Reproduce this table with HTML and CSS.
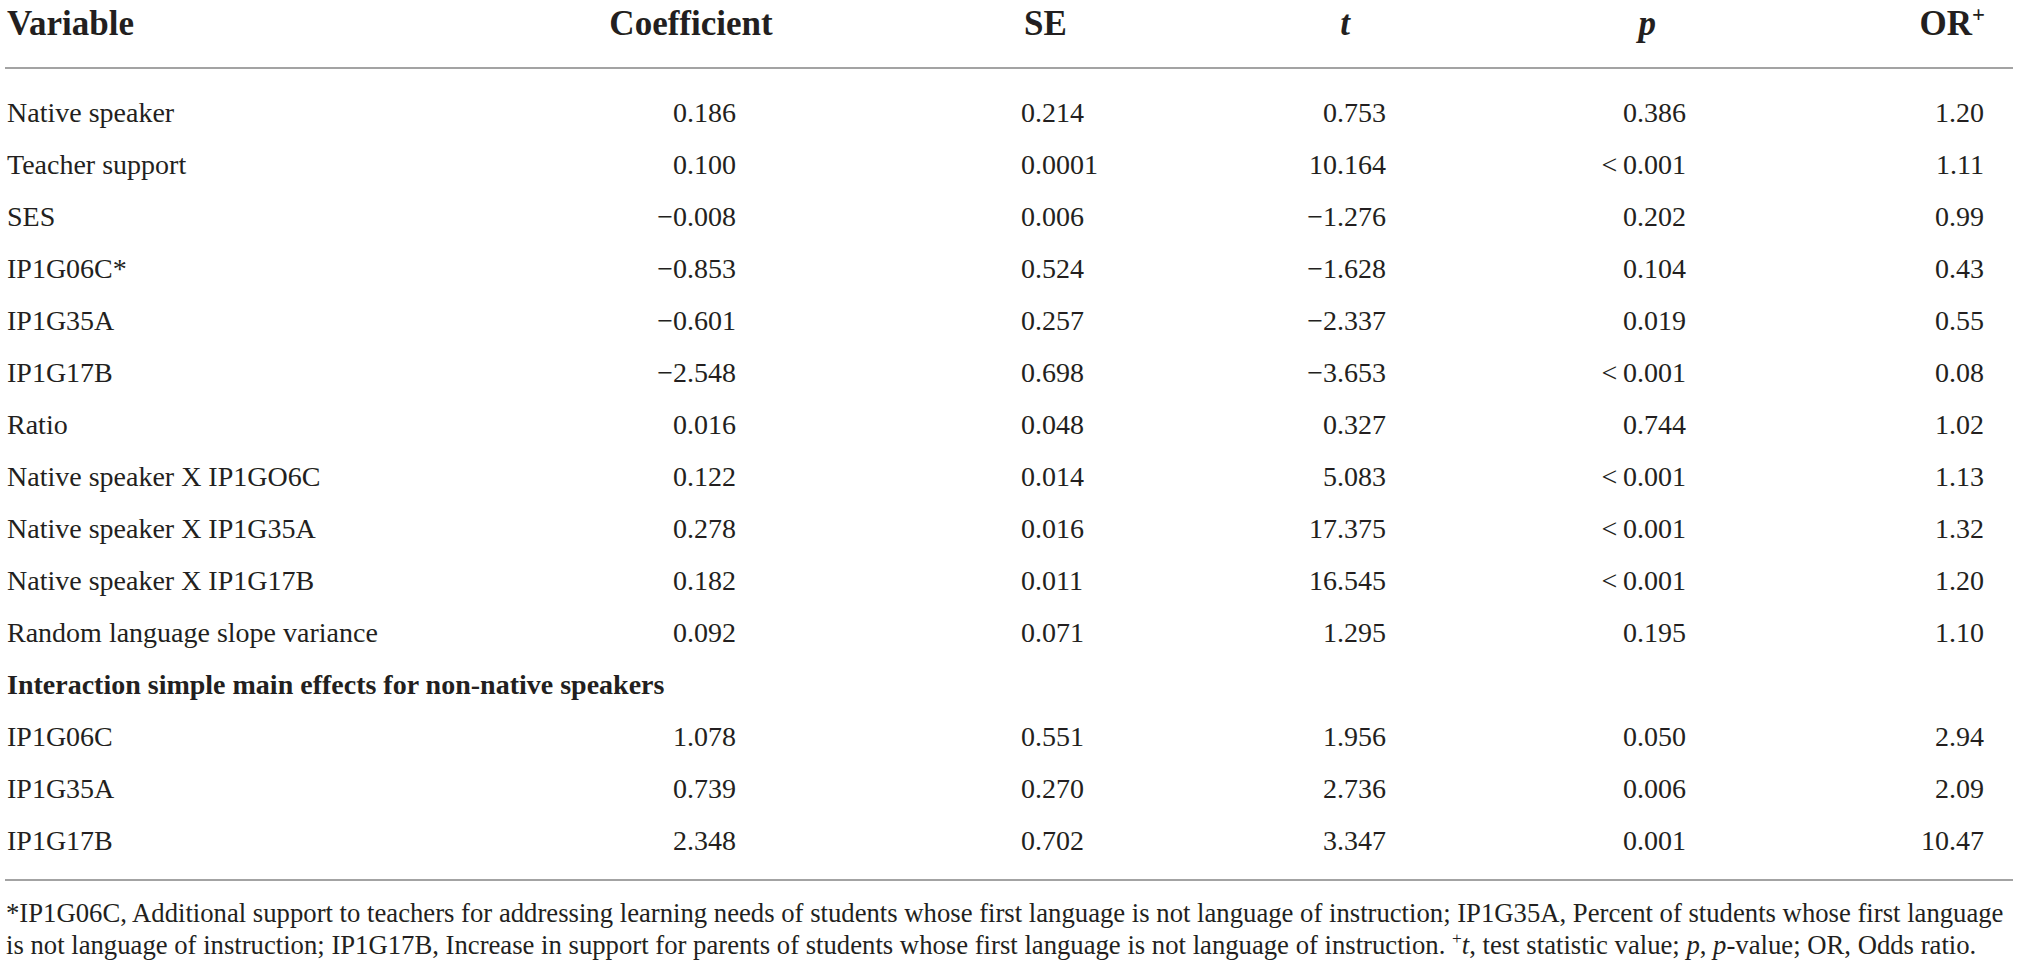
FILE: index.html
```html
<!DOCTYPE html>
<html lang="en">
<head>
  <meta charset="UTF-8">
  <meta name="viewport" content="width=device-width, initial-scale=1.0">
  <title>Table</title>
  <link rel="stylesheet" href="styles.css">
</head>
<body>
  <div class="table">
    <div class="row head">
      <div class="cell var">Variable</div>
      <div class="cell coef">Coefficient</div>
      <div class="cell se">SE</div>
      <div class="cell tval"><i>t</i></div>
      <div class="cell pval"><i>p</i></div>
      <div class="cell odds">OR<sup>+</sup></div>
    </div>

    <div class="body">
      <div class="row">
        <div class="cell var">Native speaker</div>
        <div class="cell coef">0.186</div>
        <div class="cell se">0.214</div>
        <div class="cell tval">0.753</div>
        <div class="cell pval">0.386</div>
        <div class="cell odds">1.20</div>
      </div>
      <div class="row">
        <div class="cell var">Teacher support</div>
        <div class="cell coef">0.100</div>
        <div class="cell se">0.0001</div>
        <div class="cell tval">10.164</div>
        <div class="cell pval">&lt;&#8201;0.001</div>
        <div class="cell odds">1.11</div>
      </div>
      <div class="row">
        <div class="cell var">SES</div>
        <div class="cell coef">&minus;0.008</div>
        <div class="cell se">0.006</div>
        <div class="cell tval">&minus;1.276</div>
        <div class="cell pval">0.202</div>
        <div class="cell odds">0.99</div>
      </div>
      <div class="row">
        <div class="cell var">IP1G06C*</div>
        <div class="cell coef">&minus;0.853</div>
        <div class="cell se">0.524</div>
        <div class="cell tval">&minus;1.628</div>
        <div class="cell pval">0.104</div>
        <div class="cell odds">0.43</div>
      </div>
      <div class="row">
        <div class="cell var">IP1G35A</div>
        <div class="cell coef">&minus;0.601</div>
        <div class="cell se">0.257</div>
        <div class="cell tval">&minus;2.337</div>
        <div class="cell pval">0.019</div>
        <div class="cell odds">0.55</div>
      </div>
      <div class="row">
        <div class="cell var">IP1G17B</div>
        <div class="cell coef">&minus;2.548</div>
        <div class="cell se">0.698</div>
        <div class="cell tval">&minus;3.653</div>
        <div class="cell pval">&lt;&#8201;0.001</div>
        <div class="cell odds">0.08</div>
      </div>
      <div class="row">
        <div class="cell var">Ratio</div>
        <div class="cell coef">0.016</div>
        <div class="cell se">0.048</div>
        <div class="cell tval">0.327</div>
        <div class="cell pval">0.744</div>
        <div class="cell odds">1.02</div>
      </div>
      <div class="row">
        <div class="cell var">Native speaker X IP1GO6C</div>
        <div class="cell coef">0.122</div>
        <div class="cell se">0.014</div>
        <div class="cell tval">5.083</div>
        <div class="cell pval">&lt;&#8201;0.001</div>
        <div class="cell odds">1.13</div>
      </div>
      <div class="row">
        <div class="cell var">Native speaker X IP1G35A</div>
        <div class="cell coef">0.278</div>
        <div class="cell se">0.016</div>
        <div class="cell tval">17.375</div>
        <div class="cell pval">&lt;&#8201;0.001</div>
        <div class="cell odds">1.32</div>
      </div>
      <div class="row">
        <div class="cell var">Native speaker X IP1G17B</div>
        <div class="cell coef">0.182</div>
        <div class="cell se">0.011</div>
        <div class="cell tval">16.545</div>
        <div class="cell pval">&lt;&#8201;0.001</div>
        <div class="cell odds">1.20</div>
      </div>
      <div class="row">
        <div class="cell var">Random language slope variance</div>
        <div class="cell coef">0.092</div>
        <div class="cell se">0.071</div>
        <div class="cell tval">1.295</div>
        <div class="cell pval">0.195</div>
        <div class="cell odds">1.10</div>
      </div>
      <div class="row">
        <div class="cell var group">Interaction simple main effects for non-native speakers</div>
      </div>
      <div class="row">
        <div class="cell var">IP1G06C</div>
        <div class="cell coef">1.078</div>
        <div class="cell se">0.551</div>
        <div class="cell tval">1.956</div>
        <div class="cell pval">0.050</div>
        <div class="cell odds">2.94</div>
      </div>
      <div class="row">
        <div class="cell var">IP1G35A</div>
        <div class="cell coef">0.739</div>
        <div class="cell se">0.270</div>
        <div class="cell tval">2.736</div>
        <div class="cell pval">0.006</div>
        <div class="cell odds">2.09</div>
      </div>
      <div class="row">
        <div class="cell var">IP1G17B</div>
        <div class="cell coef">2.348</div>
        <div class="cell se">0.702</div>
        <div class="cell tval">3.347</div>
        <div class="cell pval">0.001</div>
        <div class="cell odds">10.47</div>
      </div>
    </div>

    <div class="foot">
      *IP1G06C, Additional support to teachers for addressing learning needs of students whose first language is not language of instruction; IP1G35A, Percent of students whose first language<br>
      is not language of instruction; IP1G17B, Increase in support for parents of students whose first language is not language of instruction. <sup>+</sup><i>t</i>, test statistic value; <i>p</i>, <i>p</i>-value; OR, Odds ratio.
    </div>
  </div>
</body>
</html>
```

FILE: styles.css
```css
body {
  margin: 0;
  background-color: #ffffff;
  color: #231f20;
  font-family: "Liberation Serif", "Times New Roman", serif;
}
.table {
  width: 2008px;
  margin-left: 5px;
}
.row {
  display: grid;
  grid-template-columns: 555px 300px 340px 300px 300px 1fr;
  align-items: center;
  height: 52px;
  font-size: 28px;
}
.head {
  box-sizing: border-box;
  height: 69px;
  padding-bottom: 19px;
  font-size: 35px;
  font-weight: bold;
  border-bottom: 2px solid #a3a3a3;
}
.body {
  padding: 18px 0 12px;
  border-bottom: 2px solid #a3a3a3;
}
.cell {
  white-space: nowrap;
}
.var {
  padding-left: 2px;
}
.group {
  font-weight: bold;
  grid-column: 1 / 7;
}
.coef {
  text-align: right;
  padding-right: 124px;
}
.se {
  text-align: left;
  padding-left: 161px;
}
.tval {
  text-align: right;
  padding-right: 114px;
}
.pval {
  text-align: right;
  padding-right: 114px;
}
.odds {
  text-align: right;
  padding-right: 29px;
}
.head .coef {
  text-align: center;
  padding-right: 38px;
}
.head .se {
  padding-left: 164px;
}
.head .tval {
  padding-right: 150px;
}
.head .pval {
  padding-right: 144px;
}
.head .odds {
  padding-right: 28px;
}
sup {
  font-size: 65%;
  line-height: 0;
}
.foot {
  padding: 16px 0 0 1px;
  font-size: 26.7px;
  line-height: 32px;
  white-space: nowrap;
}
```
